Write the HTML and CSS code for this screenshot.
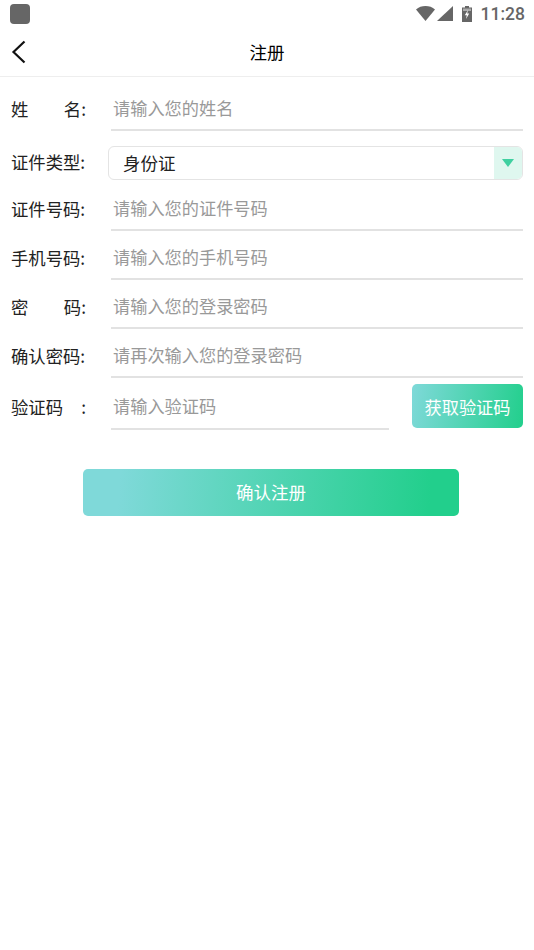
FILE: index.html
```html
<!DOCTYPE html>
<html lang="zh-CN">
<head>
    <meta charset="UTF-8">
    <meta name="viewport" content="width=device-width, initial-scale=1.0">
    <title>注册</title>
    <link rel="stylesheet" href="styles.css">
</head>
<body>
    <div class="status-bar">
        <span class="app-dot"></span>
        <div class="status-right">
            <svg class="wifi" width="19" height="15" viewBox="0 0 19 15"><path d="M0 3.400C2.600 1.200 5.900 0 9.500 0s6.900 1.200 9.500 3.400L9.500 15z" fill="#666"/></svg>
            <svg class="signal" width="16" height="15" viewBox="0 0 16 15"><path d="M16 0v15H0z" fill="#666"/></svg>
            <svg class="battery" width="10" height="16" viewBox="0 0 10 16"><path d="M3 0h4v1.500h3V16H0V1.500h3z" fill="#666"/><path d="M1 2.500h8V5H1z" fill="#aaa"/><path d="M6 4 2.800 9.200h2L4 13l3.200-5.400h-2z" fill="#fff"/></svg>
            <span class="time">11:28</span>
        </div>
    </div>

    <header class="title-bar">
        <svg class="back" width="16" height="24" viewBox="0 0 16 24"><path d="M13.500 1.500 2.500 12l11 10.500" fill="none" stroke="#111" stroke-width="2.200"/></svg>
        <h1>注册</h1>
    </header>

    <form class="form">
        <div class="row row-first">
            <label class="label label-spread"><span>姓</span><span>名:</span></label>
            <input class="field" placeholder="请输入您的姓名">
        </div>
        <div class="row row-select">
            <label class="label">证件类型:</label>
            <div class="select">
                <span>身份证</span>
                <span class="select-arrow"><i></i></span>
            </div>
        </div>
        <div class="row row-id">
            <label class="label">证件号码:</label>
            <input class="field" placeholder="请输入您的证件号码">
        </div>
        <div class="row">
            <label class="label">手机号码:</label>
            <input class="field" placeholder="请输入您的手机号码">
        </div>
        <div class="row">
            <label class="label label-spread"><span>密</span><span>码:</span></label>
            <input class="field" placeholder="请输入您的登录密码">
        </div>
        <div class="row">
            <label class="label">确认密码:</label>
            <input class="field" placeholder="请再次输入您的登录密码">
        </div>
        <div class="row row-code">
            <label class="label label-spread"><span>验证码</span><span>:</span></label>
            <input class="field field-code" placeholder="请输入验证码">
            <button class="code-btn" type="button">获取验证码</button>
        </div>
        <button class="submit" type="button">确认注册</button>
    </form>
</body>
</html>
```

FILE: styles.css
```css
* {
    box-sizing: border-box;
}

body {
    margin: 0;
    height: 950px;
    overflow: hidden;
    background-color: #fff;
    color: #222;
    font-family: "Noto Sans CJK SC", "Noto Sans", sans-serif;
    font-size: 17.200px;
}

.status-bar {
    display: flex;
    justify-content: space-between;
    align-items: center;
    height: 28px;
    padding: 0 9px 1px 10px;
}

.app-dot {
    width: 20px;
    height: 20px;
    border-radius: 4px;
    background-color: #666;
}

.status-right {
    display: flex;
    align-items: center;
}

.signal {
    margin-left: 2px;
}

.battery {
    margin-left: 9px;
}

.time {
    margin-left: 9px;
    color: #666;
    font-family: Roboto, sans-serif;
    font-size: 17.500px;
    font-weight: 500;
}

.title-bar {
    position: relative;
    display: flex;
    justify-content: center;
    align-items: center;
    height: 49px;
    padding-bottom: 2px;
    border-bottom: 1px solid #eee;
}

.title-bar h1 {
    margin: 0;
    color: #000;
    font-size: 17.500px;
    font-weight: 400;
}

.back {
    position: absolute;
    left: 11px;
    top: 12px;
}

.form {
    display: flex;
    flex-direction: column;
    padding: 0 11px;
}

.row {
    display: flex;
    align-items: center;
    height: 49px;
    padding-top: 4px;
}

.row-first {
    height: 54px;
    padding-top: 9px;
}

.row-select {
    height: 50px;
    align-items: flex-end;
    padding-top: 0;
    padding-bottom: 1px;
}

.row-id {
    height: 50px;
    padding-top: 5px;
}

.label {
    flex: none;
    width: 75px;
    margin-right: 25px;
    color: #222;
    font-size: 17.330px;
    line-height: 24px;
}

.row-select .label {
    padding-bottom: 2px;
    line-height: 32px;
}

.label-spread {
    display: flex;
    justify-content: space-between;
}

.field {
    flex: 1;
    min-width: 0;
    align-self: stretch;
    padding: 0 3px 0 2px;
    border: 0;
    border-bottom: 2px solid #e2e2e2;
    outline: none;
    background: transparent;
    color: #222;
    font: inherit;
}

.field::placeholder {
    color: #999;
    opacity: 1;
}

.select {
    display: flex;
    flex: 1;
    justify-content: space-between;
    align-items: center;
    height: 34px;
    margin-left: -3px;
    padding-left: 14px;
    overflow: hidden;
    border: 1px solid #e4e4e4;
    border-radius: 6px;
    color: #222;
    font-size: 17.500px;
}

.select > span:first-child {
    padding-bottom: 2px;
}

.select-arrow {
    display: flex;
    justify-content: center;
    align-items: center;
    width: 28px;
    height: 100%;
    background-color: #dff7ef;
}

.select-arrow i {
    width: 0;
    height: 0;
    border-top: 8px solid #3fd0a0;
    border-left: 6.500px solid transparent;
    border-right: 6.500px solid transparent;
}

.row-code {
    align-items: flex-start;
    height: 52px;
    padding-top: 6px;
}

.row-code .label {
    margin-top: 11px;
}

.field-code {
    flex: none;
    width: 278px;
    height: 46px;
    padding-bottom: 2px;
    align-self: flex-start;
}

.code-btn {
    width: 111px;
    height: 44px;
    margin-left: 23px;
    padding: 0;
    border: 0;
    border-radius: 5px;
    background: linear-gradient(100deg, #7fd9d9, #22cf8c);
    color: #fff;
    font: inherit;
}

.submit {
    align-self: flex-start;
    width: 376px;
    height: 47px;
    margin: 39px 0 0 72px;
    padding: 0 0 2px;
    border: 0;
    border-radius: 5px;
    background: linear-gradient(95deg, #7fd9d9 10%, #22cf8c 92%);
    color: #fff;
    font: inherit;
    font-size: 17.500px;
}
```
